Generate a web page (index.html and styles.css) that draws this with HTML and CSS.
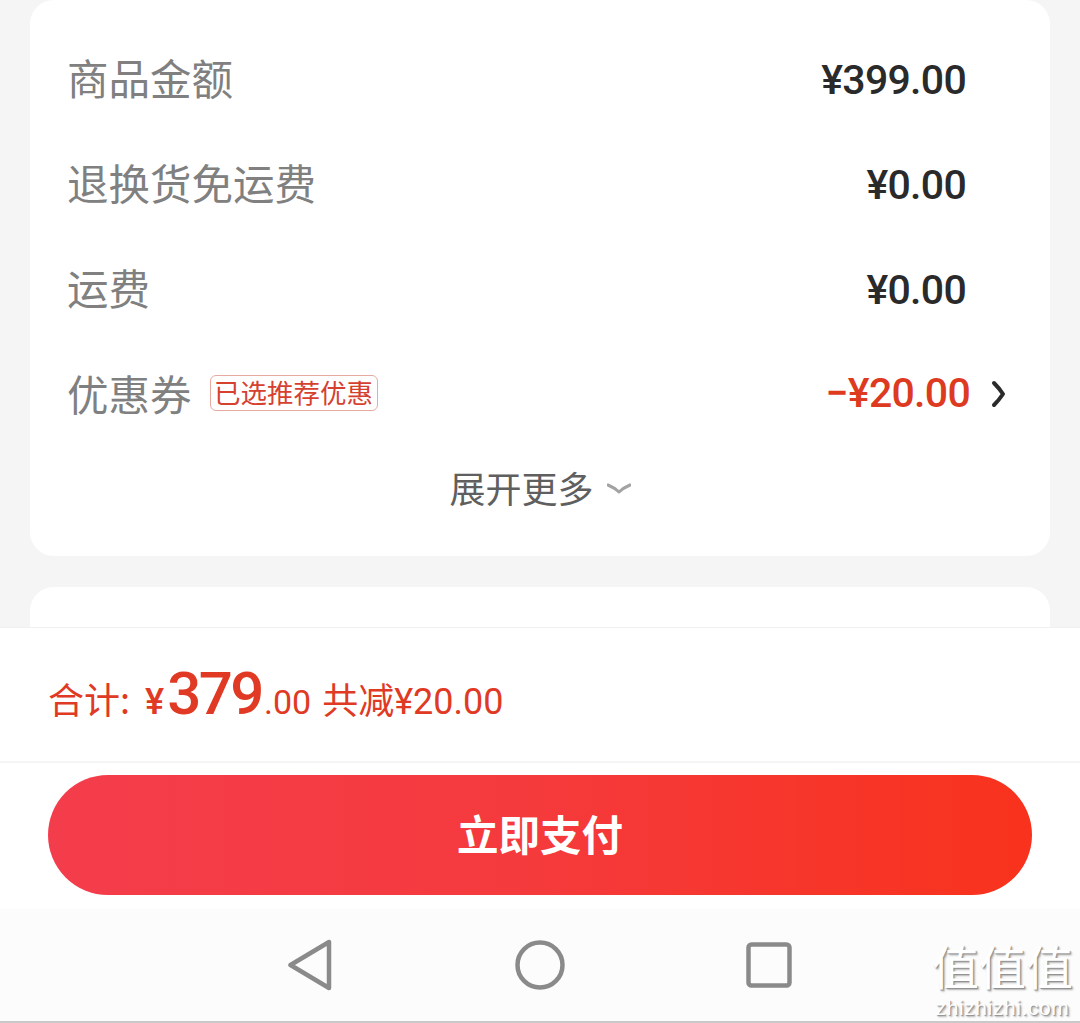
FILE: index.html
```html
<!DOCTYPE html>
<html>
<head>
    <title>确认订单</title>
    <link rel="stylesheet" href="styles.css">
</head>
<body>
    <div class="page">
        <div class="content">
            <div class="card">
                <div class="row">
                    <span class="label">商品金额</span>
                    <span class="amount">¥399.00</span>
                </div>
                <div class="row">
                    <span class="label">退换货免运费</span>
                    <span class="amount">¥0.00</span>
                </div>
                <div class="row">
                    <span class="label">运费</span>
                    <span class="amount">¥0.00</span>
                </div>
                <div class="row coupon">
                    <span class="label">优惠券</span>
                    <span class="tag">已选推荐优惠</span>
                    <span class="amount discount">−¥20.00</span>
                    <svg class="arrow" width="16" height="28" viewBox="0 0 16 28">
                        <path d="M3 3 Q8 8 12 14 Q8 20 3 25" fill="none" stroke="#2b2b2b" stroke-width="4" stroke-linecap="round" stroke-linejoin="round"/>
                    </svg>
                </div>
                <div class="more">
                    <span>展开更多</span>
                    <svg width="24" height="12" viewBox="0 0 24 12">
                        <path d="M1 2 Q8 5 12 9 Q16 5 23 2" fill="none" stroke="#a3a3a3" stroke-width="3" stroke-linecap="round" stroke-linejoin="round"/>
                    </svg>
                </div>
            </div>
            <div class="card next"></div>
        </div>

        <div class="total">
            <span class="total-label">合计:</span>
            <span class="yen">¥</span><span class="big">379</span><span class="cents">.00</span>
            <span class="saved">共减¥20.00</span>
        </div>

        <div class="pay">
            <button class="pay-btn">立即支付</button>
        </div>

        <div class="navbar">
            <svg width="46" height="52" viewBox="0 0 46 52">
                <path d="M41 3 V49 L2.5 26 Z" fill="none" stroke="#8a8a8a" stroke-width="4.5" stroke-linejoin="round"/>
            </svg>
            <svg width="50" height="50" viewBox="0 0 50 50">
                <circle cx="25" cy="25" r="22.5" fill="none" stroke="#8a8a8a" stroke-width="4.5"/>
            </svg>
            <svg width="46" height="46" viewBox="0 0 46 46">
                <rect x="2.5" y="2.5" width="41" height="41" rx="3" fill="none" stroke="#8a8a8a" stroke-width="4.5"/>
            </svg>
        </div>

        <div class="watermark">
            <div class="wm-chars">值值值</div>
            <div class="wm-site">zhizhizhi.com</div>
        </div>
    </div>
</body>
</html>
```

FILE: styles.css
```css
* {
    box-sizing: border-box;
}
body {
    margin: 0;
    background-color: #fff;
    font-family: "Roboto", "Noto Sans CJK SC", sans-serif;
}
.page {
    position: relative;
    width: 1080px;
    height: 1023px;
    overflow: hidden;
    display: flex;
    flex-direction: column;
    border-bottom: 2px solid #c9c9c9;
}
.content {
    height: 628px;
    padding: 0 30px;
    background-color: #f5f5f5;
    overflow: hidden;
    border-bottom: 1px solid #f0f0f0;
}
.card {
    height: 556px;
    padding: 27px 44px 0 37px;
    background-color: #fff;
    border-radius: 24px;
}
.next {
    margin-top: 31px;
    height: 100px;
}
.row {
    display: flex;
    align-items: center;
    height: 105px;
}
.label {
    margin-bottom: 6px;
    font-family: "Noto Sans CJK SC", sans-serif;
    font-size: 41.5px;
    color: #808080;
}
.coupon .label {
    margin-bottom: 4px;
}
.amount {
    margin-left: auto;
    padding-right: 40px;
    font-size: 41px;
    font-weight: 500;
    letter-spacing: -0.7px;
    color: #2a2a2a;
}
.tag {
    margin-left: 18px;
    padding: 0 3.5px;
    height: 36px;
    line-height: 31px;
    font-family: "Noto Sans CJK SC", sans-serif;
    font-size: 26.5px;
    color: #d6402f;
    border: 1px solid #e6aaa2;
    border-radius: 6px;
}
.coupon .tag {
    margin-top: -4px;
}
.discount {
    margin-bottom: 4px;
    padding-right: 0;
    color: #dd3a1f;
}
.arrow {
    margin-left: 21px;
    margin-right: -1px;
    margin-bottom: 2px;
}
.more {
    display: flex;
    justify-content: center;
    align-items: center;
    gap: 13px;
    margin-top: -2px;
    padding-left: 7px;
    height: 84px;
    font-family: "Noto Sans CJK SC", sans-serif;
    font-size: 36px;
    color: #5f5f5f;
}
.more svg {
    margin-top: 3px;
}
.total {
    display: flex;
    align-items: baseline;
    height: 135px;
    padding: 30px 0 0 48px;
    border-bottom: 2px solid #f5f5f5;
    color: #e03a24;
}
.total-label {
    font-family: "Noto Sans CJK SC", sans-serif;
    font-size: 36px;
}
.yen {
    margin-left: 15px;
    font-size: 36px;
    font-weight: 500;
}
.big {
    margin-left: 3px;
    font-size: 60px;
    font-weight: 500;
    letter-spacing: -2.5px;
}
.cents {
    margin-left: 2px;
    font-size: 34px;
}
.saved {
    margin-left: 11px;
    font-size: 36px;
}
.pay {
    height: 146px;
    padding: 12px 48px 0;
}
.pay-btn {
    display: block;
    width: 100%;
    height: 120px;
    padding-bottom: 5px;
    border: none;
    border-radius: 60px;
    background: linear-gradient(90deg, #f43d4c, #f53a3c 50%, #f8321c);
    color: #fff;
    font-family: "Noto Sans CJK SC", sans-serif;
    font-size: 41.5px;
    font-weight: 700;
}
.navbar {
    flex: 1;
    display: flex;
    justify-content: center;
    align-items: center;
    gap: 181px;
    background-color: #fcfcfc;
}
.watermark {
    position: absolute;
    right: 7px;
    bottom: 1px;
    text-align: center;
    color: #fff;
    text-shadow: 1px 1px 1px #8e8e8e, 2px 2px 2px #b5b5b5;
}
.wm-chars {
    font-family: "Liberation Sans", "Noto Sans CJK SC", sans-serif;
    font-size: 47px;
    line-height: 54px;
}
.wm-site {
    font-family: "Liberation Sans", sans-serif;
    font-size: 21px;
    line-height: 24px;
    letter-spacing: 0.6px;
}
```
